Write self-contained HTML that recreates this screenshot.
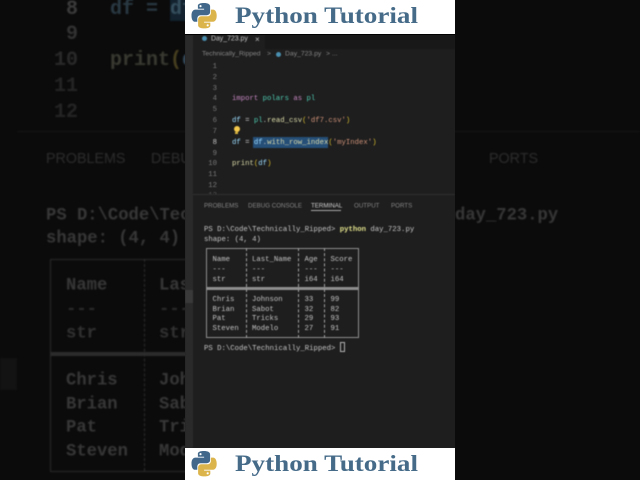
<!DOCTYPE html>
<html><head><meta charset="utf-8"><style>
html,body{margin:0;padding:0;background:#0b0b0b}
#r{position:relative;width:640px;height:480px;overflow:hidden;background:#0b0b0b;font-family:"Liberation Mono",monospace}
.t{position:absolute;white-space:pre;line-height:1}
#bg{position:absolute;left:0;top:0;width:640px;height:480px;filter:blur(.9px)}
#bg .t{font-size:17.2px;color:#383838;font-weight:bold;transform:translateY(calc(-50% + 2px))}
#c{position:absolute;left:185px;top:0;width:270px;height:480px;background:#1e1e1e;overflow:hidden}
#i{position:absolute;left:-185px;top:0;width:640px;height:480px;filter:blur(.45px)}
#i .t{transform:translateY(calc(-50% + 1.8px));font-size:7.3px;color:#c4c4c4}
#i .s{font-family:"Liberation Sans",sans-serif;font-size:6.2px;color:#858585}
#i .n{color:#7a7a7a;width:16px;left:201px;text-align:right}
.l{position:absolute}
.w{position:absolute;left:185px;width:270px;background:#fff;z-index:5}
</style></head><body><div id="r">
<div id="bg">
<div class="l" style="left:0;top:358px;width:17px;height:32px;background:#131313"></div>
<div class="t" style="left:66px;top:8px;font-size:20px;color:#3c3c3c">8</div>
<div class="t" style="left:66px;top:33px;font-size:20px;color:#333">9</div>
<div class="t" style="left:54px;top:59px;font-size:20px;color:#2a2a2a">10</div>
<div class="t" style="left:54px;top:85px;font-size:20px;color:#252525">11</div>
<div class="t" style="left:54px;top:111px;font-size:20px;color:#252525">12</div>
<div class="t" style="left:110px;top:8px;font-size:20px;color:#2a3a44">df = <span style="background:#13222e;color:#36505f">df</span></div>
<div class="t" style="left:110px;top:59px;font-size:20px;color:#3a3a32">print<span style="color:#4a4120">(</span><span style="color:#33495a">df</span></div>
<div class="l" style="left:17px;top:131px;width:623px;height:1px;background:#171717"></div>
<div class="t" style="left:46px;top:157px;font-family:'Liberation Sans',sans-serif;font-size:14.3px;font-weight:normal;color:#2e2e2e">PROBLEMS</div>
<div class="t" style="left:151px;top:157px;font-family:'Liberation Sans',sans-serif;font-size:14.3px;font-weight:normal;color:#2e2e2e">DEBUG</div>
<div class="t" style="left:489px;top:157px;font-family:'Liberation Sans',sans-serif;font-size:14.3px;font-weight:normal;color:#2e2e2e">PORTS</div>
<div class="t" style="left:46px;top:214px">PS D:\Code\Tec</div>
<div class="t" style="left:46px;top:237px">shape: (4, 4)</div>
<div class="t" style="left:455px;top:214px;color:#383838">day_723.py</div>
<div class="l" style="left:50px;top:259px;width:300px;height:211px;border:1px solid #2c2c2c;border-right:0"></div>
<div class="l" style="left:144px;top:259px;height:212px;border-left:1px dashed #303030"></div>
<div class="l" style="left:50px;top:352px;width:300px;height:4px;background:#2c2c2c"></div>
<div class="t" style="left:66px;top:284px">Name</div><div class="t" style="left:159px;top:284px">Last_Name</div>
<div class="t" style="left:66px;top:308px;color:#2c2c2c">---</div><div class="t" style="left:159px;top:308px;color:#2c2c2c">---</div>
<div class="t" style="left:66px;top:332px;color:#323232">str</div><div class="t" style="left:159px;top:332px;color:#323232">str</div>
<div class="t" style="left:66px;top:379px">Chris</div><div class="t" style="left:159px;top:379px">Johnson</div>
<div class="t" style="left:66px;top:403px">Brian</div><div class="t" style="left:159px;top:403px">Sabot</div>
<div class="t" style="left:66px;top:426px">Pat</div><div class="t" style="left:159px;top:426px">Tricks</div>
<div class="t" style="left:66px;top:450px">Steven</div><div class="t" style="left:159px;top:450px">Modelo</div>
</div>
<div id="c"><div id="i">
<div class="l" style="left:185px;top:35px;width:8px;height:413px;background:#2a2a2a"></div>
<div class="l" style="left:185px;top:290px;width:8px;height:13px;background:#3a3a3a"></div>
<div class="l" style="left:193px;top:35px;width:262px;height:14px;background:#181818"></div>
<div class="l" style="left:193px;top:35px;width:72px;height:14px;background:#1e1e1e"></div>
<div class="l" style="left:202px;top:35.500px;width:5px;height:5px;border-radius:50%;background:#4a8fb0"></div>
<div class="t s" style="left:211px;top:37.500px;color:#c4c4c4;font-size:6.9px">Day_723.py</div>
<div class="t s" style="left:255px;top:37.500px;color:#c0c0c0;font-size:8px">×</div>
<div class="t s" style="left:202px;top:53px;font-size:6.8px">Technically_Ripped</div>
<div class="t s" style="left:267px;top:53px;font-size:6.8px">&gt;</div>
<div class="l" style="left:275.500px;top:52px;width:5px;height:5px;border-radius:50%;background:#4a8fb0"></div>
<div class="t s" style="left:285px;top:53px;font-size:6.8px">Day_723.py</div>
<div class="t s" style="left:326px;top:53px;font-size:6.8px">&gt; ...</div>
<div class="t n" style="top:66px">1</div><div class="t n" style="top:77px">2</div><div class="t n" style="top:88px">3</div><div class="t n" style="top:98px">4</div><div class="t n" style="top:109px">5</div><div class="t n" style="top:120px">6</div><div class="t n" style="top:131px">7</div><div class="t n" style="top:142px;color:#c4c4c4">8</div><div class="t n" style="top:153px">9</div><div class="t n" style="top:163px">10</div><div class="t n" style="top:174px">11</div><div class="t n" style="top:185px">12</div><div class="t n" style="top:195px;color:#555">13</div>
<div class="t" style="left:232px;top:98px"><span style="color:#c586c0">import</span> <span style="color:#4ec9b0">polars</span> <span style="color:#c586c0">as</span> <span style="color:#4ec9b0">pl</span></div>
<div class="t" style="left:232px;top:120px"><span style="color:#9cdcfe">df</span> = <span style="color:#4ec9b0">pl</span>.<span style="color:#dcdcaa">read_csv</span><span style="color:#d4b830">(</span><span style="color:#ce9178">'df7.csv'</span><span style="color:#d4b830">)</span></div>
<div class="l" style="left:233.500px;top:126px;width:6px;height:6px;border-radius:50%;background:#f2c94c"></div>
<div class="l" style="left:235px;top:132px;width:3px;height:2px;background:#d8b440"></div>
<div class="l" style="left:253px;top:136.500px;width:75px;height:11px;background:#264f78"></div>
<div class="t" style="left:232px;top:142px"><span style="color:#9cdcfe">df</span> = <span style="color:#9cdcfe">df</span>.<span style="color:#dcdcaa">with_row_index</span><span style="color:#d4b830">(</span><span style="color:#ce9178">'myIndex'</span><span style="color:#d4b830">)</span></div>
<div class="t" style="left:232px;top:163px"><span style="color:#dcdcaa">print</span><span style="color:#d4b830">(</span><span style="color:#9cdcfe">df</span><span style="color:#d4b830">)</span></div>
<div class="l" style="left:193px;top:194px;width:262px;height:254px;background:#1e1e1e;border-top:1px solid #2f2f2f;box-sizing:border-box"></div>
<div class="t s" style="left:204px;top:204.500px">PROBLEMS</div>
<div class="t s" style="left:248px;top:204.500px">DEBUG CONSOLE</div>
<div class="t s" style="left:311px;top:204.500px;color:#d0d0d0">TERMINAL</div>
<div class="l" style="left:311px;top:210px;width:30px;height:1px;background:#a8a8a8"></div>
<div class="t s" style="left:354px;top:204.500px">OUTPUT</div>
<div class="t s" style="left:391px;top:204.500px">PORTS</div>
<div class="t" style="left:204px;top:229px">PS D:\Code\Technically_Ripped&gt; <span style="color:#e0e08c;font-weight:bold">python</span> day_723.py</div>
<div class="t" style="left:204px;top:239px">shape: (4, 4)</div>
<div class="l" style="left:206px;top:248px;width:153px;height:90px;border:1px solid #8e8e8e;box-sizing:border-box"></div>
<div class="l" style="left:206px;top:287px;width:153px;height:2.500px;background:#8e8e8e"></div>
<div class="l" style="left:245.500px;top:248px;height:90px;border-left:1px dashed #a0a0a0"></div>
<div class="l" style="left:298px;top:248px;height:90px;border-left:1px dashed #a0a0a0"></div>
<div class="l" style="left:324px;top:248px;height:90px;border-left:1px dashed #a0a0a0"></div>
<div class="t" style="left:212.500px;top:258.500px">Name</div><div class="t" style="left:252px;top:258.500px">Last_Name</div><div class="t" style="left:304.500px;top:258.500px">Age</div><div class="t" style="left:330.500px;top:258.500px">Score</div>
<div class="t" style="left:212.500px;top:268.500px">---</div><div class="t" style="left:252px;top:268.500px">---</div><div class="t" style="left:304.500px;top:268.500px">---</div><div class="t" style="left:330.500px;top:268.500px">---</div>
<div class="t" style="left:212.500px;top:278.500px">str</div><div class="t" style="left:252px;top:278.500px">str</div><div class="t" style="left:304.500px;top:278.500px">i64</div><div class="t" style="left:330.500px;top:278.500px">i64</div>
<div class="t" style="left:212.500px;top:298.500px">Chris</div><div class="t" style="left:252px;top:298.500px">Johnson</div><div class="t" style="left:304.500px;top:298.500px">33</div><div class="t" style="left:330.500px;top:298.500px">99</div>
<div class="t" style="left:212.500px;top:308.500px">Brian</div><div class="t" style="left:252px;top:308.500px">Sabot</div><div class="t" style="left:304.500px;top:308.500px">32</div><div class="t" style="left:330.500px;top:308.500px">82</div>
<div class="t" style="left:212.500px;top:318px">Pat</div><div class="t" style="left:252px;top:318px">Tricks</div><div class="t" style="left:304.500px;top:318px">29</div><div class="t" style="left:330.500px;top:318px">93</div>
<div class="t" style="left:212.500px;top:328px">Steven</div><div class="t" style="left:252px;top:328px">Modelo</div><div class="t" style="left:304.500px;top:328px">27</div><div class="t" style="left:330.500px;top:328px">91</div>
<div class="t" style="left:204px;top:348px">PS D:\Code\Technically_Ripped&gt;</div>
<div class="l" style="left:339.500px;top:342px;width:5px;height:10px;border:1px solid #b0b0b0;box-sizing:border-box"></div>
</div></div>
<div class="w" style="top:0;height:34px"><svg width="270" height="34" style="position:absolute;left:0;top:0"><g transform="translate(6.500,3) scale(.2)"><path fill="#41688a" d="M62 0C30 0 32 14 32 14v15h31v4H20S0 31 0 63s18 31 18 31h11V79s-1-18 17-18h30s17 0 17-16V17S96 0 62 0zM45 10a5.500 5.500 0 110 11 5.500 5.500 0 010-11z"/><path fill="#dcb44c" d="M64 127c32 0 30-14 30-14V98H63v-4h43s20 2 20-30-18-31-18-31H97v15s1 18-17 18H50s-17 0-17 16v28s-3 17 31 17zm17-10a5.500 5.500 0 110-11 5.500 5.500 0 010 11z"/></g><text x="50" y="23" textLength="183" lengthAdjust="spacingAndGlyphs" font-family="Liberation Serif,serif" font-weight="bold" font-size="23" fill="#456b89">Python Tutorial</text></svg></div>
<div class="l" style="left:185px;top:34px;width:270px;height:1px;background:#000;z-index:5"></div>
<div class="w" style="top:448px;height:32px"><svg width="270" height="32" style="position:absolute;left:0;top:0"><g transform="translate(6.500,3) scale(.2)"><path fill="#41688a" d="M62 0C30 0 32 14 32 14v15h31v4H20S0 31 0 63s18 31 18 31h11V79s-1-18 17-18h30s17 0 17-16V17S96 0 62 0zM45 10a5.500 5.500 0 110 11 5.500 5.500 0 010-11z"/><path fill="#dcb44c" d="M64 127c32 0 30-14 30-14V98H63v-4h43s20 2 20-30-18-31-18-31H97v15s1 18-17 18H50s-17 0-17 16v28s-3 17 31 17zm17-10a5.500 5.500 0 110-11 5.500 5.500 0 010 11z"/></g><text x="50" y="23" textLength="183" lengthAdjust="spacingAndGlyphs" font-family="Liberation Serif,serif" font-weight="bold" font-size="23" fill="#456b89">Python Tutorial</text></svg></div>
</div></body></html>
